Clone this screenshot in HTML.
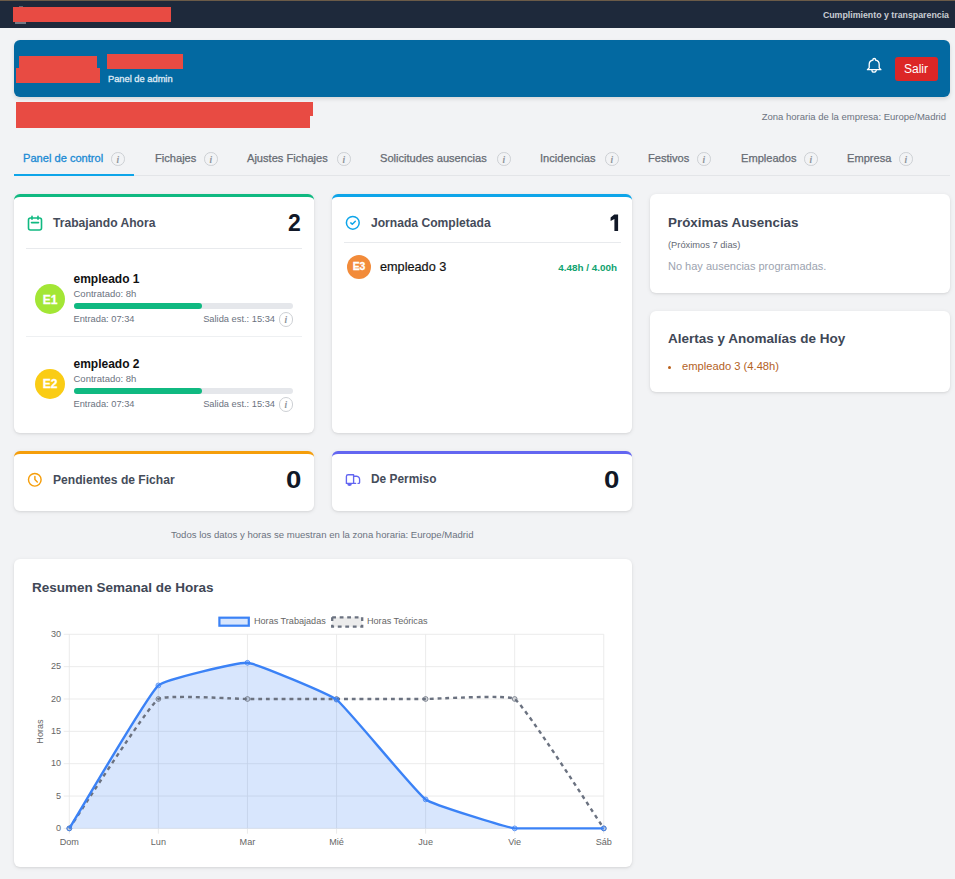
<!DOCTYPE html>
<html><head><meta charset="utf-8">
<style>
*{box-sizing:border-box;margin:0;padding:0}
html,body{width:955px;height:879px;overflow:hidden;background:#f2f3f5;font-family:"Liberation Sans",sans-serif;position:relative}
.abs{position:absolute}
.t{position:absolute;white-space:nowrap;line-height:1}
.red{position:absolute;background:#e84b43}
.card{position:absolute;background:#fff;border-radius:6px;box-shadow:0 1px 4px rgba(0,0,0,0.09),0 1px 2px rgba(0,0,0,0.05)}
.topb{position:absolute;left:0;top:0;right:0;height:3px;border-radius:6px 6px 0 0}
.info{position:absolute;width:13.5px;height:13.5px;border:1px solid #cdd0d4;border-radius:50%;}
.med{-webkit-text-stroke:0.3px currentColor}
.info:after{content:"i";position:absolute;left:0;right:0;top:1.5px;text-align:center;font-family:"Liberation Serif",serif;font-style:italic;font-weight:700;font-size:9.5px;line-height:10px;color:#8f949b}
</style></head>
<body>
<!-- top bar -->
<div class="abs" style="left:0;top:0;width:955px;height:1px;background:#6b5b48"></div>
<div class="abs" style="left:0;top:1px;width:955px;height:27px;background:#1e293b"></div>
<div class="abs" style="left:15px;top:22px;width:11px;height:1.6px;background:#b8bcc4;opacity:0.55"></div>
<div class="abs" style="left:18.5px;top:5.8px;width:4.5px;height:1px;background:#8a8f99;opacity:0.6"></div>
<div class="red" style="left:13px;top:7px;width:158px;height:15px"></div>
<div class="t" style="right:6px;top:11px;font-size:8.8px;font-weight:700;color:#c9cdd3">Cumplimiento y transparencia</div>

<!-- header -->
<div class="abs" style="left:14px;top:40px;width:936px;height:57px;background:#0369a1;border-radius:6px;box-shadow:0 2px 4px rgba(0,0,0,0.12)"></div>
<div class="red" style="left:19px;top:56px;width:78px;height:13px"></div>
<div class="red" style="left:16px;top:68px;width:84px;height:15px"></div>
<div class="red" style="left:107px;top:54px;width:76px;height:15px"></div>
<div class="t" style="left:108px;top:75px;font-size:9.3px;color:#dbe7f3;-webkit-text-stroke:0.35px #dbe7f3">Panel de admin</div>
<svg class="abs" style="left:862px;top:54px" width="24" height="24" viewBox="0 0 24 24" fill="none" stroke="#fff" stroke-width="1.3" stroke-linecap="round" stroke-linejoin="round"><path d="M5.4 15.7L7.2 13.9V10.4C7.2 8.1 8.6 6.6 10.9 6.2V5.6C10.9 4.9 11.4 4.5 12.25 4.5C13.1 4.5 13.6 4.9 13.6 5.6V6.2C15.9 6.6 17.2 8.1 17.2 10.4V13.9L18.9 15.7Z"/><path d="M9.9 15.9A2.2 2.2 0 0 0 14.3 15.9"/></svg>
<div class="abs" style="left:895px;top:57px;width:43px;height:24px;background:#dc2626;border-radius:3px"></div>
<div class="t" style="left:904px;top:63px;font-size:12px;color:#fff">Salir</div>

<!-- red redaction under header -->
<div class="red" style="left:16px;top:102px;width:297px;height:14px"></div>
<div class="red" style="left:16px;top:115px;width:294px;height:13px"></div>
<div class="t" style="right:9px;top:112px;font-size:9.5px;color:#6b7280">Zona horaria de la empresa: Europe/Madrid</div>

<!-- tabs -->
<div class="abs" style="left:14px;top:175px;width:936px;height:1px;background:#e3e5e8"></div>
<div class="abs" style="left:14px;top:174px;width:120px;height:2px;background:#0ea5e9"></div>
<div class="t med" style="left:23px;top:153px;font-size:11.1px;color:#1a8ad4">Panel de control</div><div class="info" style="left:111px;top:152px"></div>
<div class="t" style="left:155px;top:153px;font-size:11.1px;color:#666b73;-webkit-text-stroke:0.25px #666b73">Fichajes</div><div class="info" style="left:204px;top:152px"></div>
<div class="t" style="left:247px;top:153px;font-size:11.1px;color:#666b73;-webkit-text-stroke:0.25px #666b73">Ajustes Fichajes</div><div class="info" style="left:337px;top:152px"></div>
<div class="t" style="left:380px;top:153px;font-size:11.1px;color:#666b73;-webkit-text-stroke:0.25px #666b73">Solicitudes ausencias</div><div class="info" style="left:497px;top:152px"></div>
<div class="t" style="left:540px;top:153px;font-size:11.1px;color:#666b73;-webkit-text-stroke:0.25px #666b73">Incidencias</div><div class="info" style="left:605px;top:152px"></div>
<div class="t" style="left:648px;top:153px;font-size:11.1px;color:#666b73;-webkit-text-stroke:0.25px #666b73">Festivos</div><div class="info" style="left:697px;top:152px"></div>
<div class="t" style="left:741px;top:153px;font-size:11.1px;color:#666b73;-webkit-text-stroke:0.25px #666b73">Empleados</div><div class="info" style="left:804px;top:152px"></div>
<div class="t" style="left:847px;top:153px;font-size:11.1px;color:#666b73;-webkit-text-stroke:0.25px #666b73">Empresa</div><div class="info" style="left:899px;top:152px"></div>


<!-- card 1 -->
<div class="card" style="left:14px;top:194px;width:300px;height:239px;border-top:3px solid #10b981"></div>
<svg class="abs" style="left:27px;top:215px" width="16" height="16" viewBox="0 0 16 16" fill="none" stroke="#10b981" stroke-width="1.6" stroke-linecap="round" stroke-linejoin="round"><rect x="1.5" y="3" width="13" height="12" rx="2"/><path d="M5 1.3v3M11 1.3v3M4.5 7.6h7"/></svg>
<div class="t" style="left:53px;top:217.3px;font-size:12.1px;font-weight:700;color:#454c5a">Trabajando Ahora</div>
<div class="t" style="left:200px;width:100.8px;text-align:right;top:212px;font-size:23px;font-weight:700;color:#111827">2</div>
<div class="abs" style="left:26px;top:248px;width:276px;height:1px;background:#e8eaed"></div>

<div class="abs" style="left:35px;top:284px;width:30px;height:30px;border-radius:50%;background:#a3e635"></div>
<div class="t" style="left:35px;width:30px;text-align:center;top:293.6px;font-size:12px;font-weight:700;color:#fff;-webkit-text-stroke:0.3px #fff">E1</div>
<div class="t" style="left:73.5px;top:272.8px;font-size:12px;font-weight:700;color:#111">empleado 1</div>
<div class="t" style="left:73.5px;top:289.2px;font-size:9.5px;color:#6b7280">Contratado: 8h</div>
<div class="abs" style="left:73.5px;top:303px;width:219.5px;height:6px;border-radius:3px;background:#e5e7eb"></div>
<div class="abs" style="left:73.5px;top:303px;width:128.5px;height:6px;border-radius:3px;background:#10b981"></div>
<div class="t" style="left:73.5px;top:314.8px;font-size:9.3px;color:#6b7280">Entrada: 07:34</div>
<div class="t" style="left:170px;width:105px;text-align:right;top:314.8px;font-size:9.3px;color:#6b7280">Salida est.: 15:34</div>
<div class="info" style="left:278.5px;top:312px;width:14.5px;height:14.5px"></div>
<div class="abs" style="left:26px;top:336px;width:276px;height:1px;background:#eef0f2"></div>

<div class="abs" style="left:35px;top:368.6px;width:30px;height:30px;border-radius:50%;background:#facc15"></div>
<div class="t" style="left:35px;width:30px;text-align:center;top:378.4px;font-size:12px;font-weight:700;color:#fff;-webkit-text-stroke:0.3px #fff">E2</div>
<div class="t" style="left:73.5px;top:357.8px;font-size:12px;font-weight:700;color:#111">empleado 2</div>
<div class="t" style="left:73.5px;top:373.8px;font-size:9.5px;color:#6b7280">Contratado: 8h</div>
<div class="abs" style="left:73.5px;top:388px;width:219.5px;height:6px;border-radius:3px;background:#e5e7eb"></div>
<div class="abs" style="left:73.5px;top:388px;width:128.5px;height:6px;border-radius:3px;background:#10b981"></div>
<div class="t" style="left:73.5px;top:399.5px;font-size:9.3px;color:#6b7280">Entrada: 07:34</div>
<div class="t" style="left:170px;width:105px;text-align:right;top:399.5px;font-size:9.3px;color:#6b7280">Salida est.: 15:34</div>
<div class="info" style="left:278.5px;top:397px;width:14.5px;height:14.5px"></div>

<!-- card 2 -->
<div class="card" style="left:332px;top:194px;width:300px;height:239px;border-top:3px solid #0ea5e9"></div>
<svg class="abs" style="left:345px;top:215px" width="16" height="16" viewBox="0 0 16 16" fill="none" stroke="#0ea5e9" stroke-width="1.5" stroke-linecap="round" stroke-linejoin="round"><circle cx="7.8" cy="7.8" r="6.4"/><path d="M5.8 7.9L7.3 9.3L10.3 6.3"/></svg>
<div class="t" style="left:371px;top:217.3px;font-size:12.1px;font-weight:700;color:#454c5a">Jornada Completada</div>
<svg class="abs" style="left:0;top:0" width="955" height="300"><path d="M614.3 214.4H618.1V230.9H614.4V218.9L610.6 221.1V217.6Z" fill="#111827"/></svg>
<div class="abs" style="left:344px;top:242px;width:277px;height:1px;background:#e8eaed"></div>
<div class="abs" style="left:347px;top:255px;width:24px;height:24px;border-radius:50%;background:#f28b3a"></div>
<div class="t" style="left:347px;width:24px;text-align:center;top:262.2px;font-size:10.4px;font-weight:700;color:#fff;-webkit-text-stroke:0.3px #fff">E3</div>
<div class="t" style="left:380px;top:261.2px;font-size:12.7px;color:#111;-webkit-text-stroke:0.2px #111">empleado 3</div>
<div class="t" style="left:500px;width:117px;text-align:right;top:262.6px;font-size:9.9px;font-weight:700;color:#10a36f">4.48h / 4.00h</div>

<!-- card 3 -->
<div class="card" style="left:14px;top:451px;width:300px;height:60px;border-top:3px solid #f59e0b"></div>
<svg class="abs" style="left:27px;top:472px" width="16" height="16" viewBox="0 0 16 16" fill="none" stroke="#f59e0b" stroke-width="1.45" stroke-linecap="round" stroke-linejoin="round"><circle cx="7.8" cy="7.8" r="6.3"/><path d="M7.9 4.5V7.6L10.3 10"/></svg>
<div class="t" style="left:53px;top:474.4px;font-size:12.1px;font-weight:700;color:#454c5a">Pendientes de Fichar</div>
<div class="t" style="left:200px;width:101.3px;text-align:right;top:468.8px;font-size:23px;font-weight:700;color:#111827;transform:scaleX(1.2);transform-origin:right">0</div>

<!-- card 4 -->
<div class="card" style="left:332px;top:451px;width:300px;height:60px;border-top:3px solid #6366f1"></div>
<svg class="abs" style="left:342px;top:469px" width="22" height="22" viewBox="0 0 22 22" fill="none" stroke="#6366f1" stroke-width="1.35" stroke-linecap="round" stroke-linejoin="round"><path d="M11.6 14.4H4.4V7.4Q4.4 5.7 6.1 5.7H11.6V14.4H13.6"/><path d="M11.6 7.2H14.7Q16.1 7.2 16.9 8.4L17.2 8.9Q17.6 9.6 17.6 10.4V13.4Q17.6 14.4 16.6 14.4H16.1"/><path d="M5.9 14.7A1.65 1.65 0 0 0 9.2 14.7Z" fill="#6366f1"/></svg>
<div class="t" style="left:371px;top:474.4px;font-size:11.9px;font-weight:700;color:#454c5a">De Permiso</div>
<div class="t" style="left:520px;width:99.4px;text-align:right;top:468.8px;font-size:23px;font-weight:700;color:#111827;transform:scaleX(1.2);transform-origin:right">0</div>

<div class="t" style="left:171px;top:530px;font-size:9.55px;color:#6b7280">Todos los datos y horas se muestran en la zona horaria: Europe/Madrid</div>

<!-- right col -->
<div class="card" style="left:650px;top:194px;width:300px;height:99px"></div>
<div class="t" style="left:668px;top:216px;font-size:13.4px;font-weight:700;color:#404756">Próximas Ausencias</div>
<div class="t" style="left:668px;top:241px;font-size:9.3px;color:#646a75">(Próximos 7 dias)</div>
<div class="t" style="left:668px;top:261.2px;font-size:11px;color:#9ca3af">No hay ausencias programadas.</div>
<div class="card" style="left:650px;top:311px;width:300px;height:81px"></div>
<div class="t" style="left:668px;top:332px;font-size:13.5px;font-weight:700;color:#404756">Alertas y Anomalías de Hoy</div>
<div class="abs" style="left:667.8px;top:366px;width:3px;height:3px;border-radius:50%;background:#b9601a"></div>
<div class="t" style="left:682px;top:360.8px;font-size:11.2px;color:#b3621f">empleado 3 (4.48h)</div>

<!-- chart card -->
<div class="card" style="left:14px;top:559px;width:618px;height:308.3px"></div>
<div class="t" style="left:32px;top:581px;font-size:13.5px;font-weight:700;color:#404756">Resumen Semanal de Horas</div>

<!-- CHART -->
<svg class="abs" style="left:0;top:0" width="955" height="879" viewBox="0 0 955 879">
<g stroke="#e6e6e6" stroke-width="0.8"><line x1="63.7" y1="828.40" x2="603.78" y2="828.40"/><line x1="63.7" y1="796.05" x2="603.78" y2="796.05"/><line x1="63.7" y1="763.70" x2="603.78" y2="763.70"/><line x1="63.7" y1="731.35" x2="603.78" y2="731.35"/><line x1="63.7" y1="699.00" x2="603.78" y2="699.00"/><line x1="63.7" y1="666.65" x2="603.78" y2="666.65"/><line x1="63.7" y1="634.30" x2="603.78" y2="634.30"/><line x1="69.30" y1="634.30" x2="69.30" y2="833.70"/><line x1="158.38" y1="634.30" x2="158.38" y2="833.70"/><line x1="247.46" y1="634.30" x2="247.46" y2="833.70"/><line x1="336.54" y1="634.30" x2="336.54" y2="833.70"/><line x1="425.62" y1="634.30" x2="425.62" y2="833.70"/><line x1="514.70" y1="634.30" x2="514.70" y2="833.70"/><line x1="603.78" y1="634.30" x2="603.78" y2="833.70"/></g>
<path d="M69.30 828.40 C78.21 814.10 146.85 696.13 158.38 685.41 C164.67 679.57 238.76 662.07 247.46 662.77 C256.58 663.50 329.08 693.92 336.54 699.65 C346.89 707.59 415.14 791.84 425.62 799.41 C432.96 804.72 505.57 826.91 514.70 828.40 C523.38 828.40 594.87 828.40 603.78 828.40 L603.78 828.40 L69.30 828.40 Z" fill="rgba(59,130,246,0.2)"/>
<path d="M69.30 828.40 C78.21 815.46 147.01 707.26 158.38 699.00 C164.83 694.32 238.55 699.00 247.46 699.00 C256.37 699.00 327.63 699.00 336.54 699.00 C345.45 699.00 416.71 699.00 425.62 699.00 C434.53 699.00 508.25 694.32 514.70 699.00 C526.07 707.26 594.87 815.46 603.78 828.40" fill="none" stroke="#6b7280" stroke-width="2.4" stroke-dasharray="3.9 3.9"/>
<circle cx="69.30" cy="828.40" r="2.4" fill="rgba(107,114,128,0.2)" stroke="#6b7280" stroke-width="0.8"/>
<circle cx="158.38" cy="699.00" r="2.4" fill="rgba(107,114,128,0.2)" stroke="#6b7280" stroke-width="0.8"/>
<circle cx="247.46" cy="699.00" r="2.4" fill="rgba(107,114,128,0.2)" stroke="#6b7280" stroke-width="0.8"/>
<circle cx="336.54" cy="699.00" r="2.4" fill="rgba(107,114,128,0.2)" stroke="#6b7280" stroke-width="0.8"/>
<circle cx="425.62" cy="699.00" r="2.4" fill="rgba(107,114,128,0.2)" stroke="#6b7280" stroke-width="0.8"/>
<circle cx="514.70" cy="699.00" r="2.4" fill="rgba(107,114,128,0.2)" stroke="#6b7280" stroke-width="0.8"/>
<circle cx="603.78" cy="828.40" r="2.4" fill="rgba(107,114,128,0.2)" stroke="#6b7280" stroke-width="0.8"/>
<path d="M69.30 828.40 C78.21 814.10 146.85 696.13 158.38 685.41 C164.67 679.57 238.76 662.07 247.46 662.77 C256.58 663.50 329.08 693.92 336.54 699.65 C346.89 707.59 415.14 791.84 425.62 799.41 C432.96 804.72 505.57 826.91 514.70 828.40 C523.38 828.40 594.87 828.40 603.78 828.40" fill="none" stroke="#3b82f6" stroke-width="2.4" stroke-linejoin="round"/>
<circle cx="69.30" cy="828.40" r="2.4" fill="rgba(59,130,246,0.2)" stroke="#3b82f6" stroke-width="0.8"/>
<circle cx="158.38" cy="685.41" r="2.4" fill="rgba(59,130,246,0.2)" stroke="#3b82f6" stroke-width="0.8"/>
<circle cx="247.46" cy="662.77" r="2.4" fill="rgba(59,130,246,0.2)" stroke="#3b82f6" stroke-width="0.8"/>
<circle cx="336.54" cy="699.65" r="2.4" fill="rgba(59,130,246,0.2)" stroke="#3b82f6" stroke-width="0.8"/>
<circle cx="425.62" cy="799.41" r="2.4" fill="rgba(59,130,246,0.2)" stroke="#3b82f6" stroke-width="0.8"/>
<circle cx="514.70" cy="828.40" r="2.4" fill="rgba(59,130,246,0.2)" stroke="#3b82f6" stroke-width="0.8"/>
<circle cx="603.78" cy="828.40" r="2.4" fill="rgba(59,130,246,0.2)" stroke="#3b82f6" stroke-width="0.8"/>
<g font-family="Liberation Sans" font-size="9.1" fill="#666"><text x="61" y="831.00" text-anchor="end">0</text><text x="61" y="798.65" text-anchor="end">5</text><text x="61" y="766.30" text-anchor="end">10</text><text x="61" y="733.95" text-anchor="end">15</text><text x="61" y="701.60" text-anchor="end">20</text><text x="61" y="669.25" text-anchor="end">25</text><text x="61" y="636.90" text-anchor="end">30</text><text x="69.30" y="844.6" text-anchor="middle">Dom</text><text x="158.38" y="844.6" text-anchor="middle">Lun</text><text x="247.46" y="844.6" text-anchor="middle">Mar</text><text x="336.54" y="844.6" text-anchor="middle">Mié</text><text x="425.62" y="844.6" text-anchor="middle">Jue</text><text x="514.70" y="844.6" text-anchor="middle">Vie</text><text x="603.78" y="844.6" text-anchor="middle">Sáb</text><text transform="translate(43.3 731.5) rotate(-90)" text-anchor="middle">Horas</text><text x="254" y="624.2">Horas Trabajadas</text><text x="367" y="624.2">Horas Teóricas</text></g>
<rect x="219.4" y="617.7" width="29.4" height="8" fill="rgba(59,130,246,0.2)" stroke="#3b82f6" stroke-width="2.2"/>
<rect x="332.2" y="617.3" width="30" height="9.4" fill="rgba(140,140,140,0.17)" stroke="#6b7280" stroke-width="2.3" stroke-dasharray="3.8 3.7"/>
</svg>
<!-- /CHART -->
</body></html>
